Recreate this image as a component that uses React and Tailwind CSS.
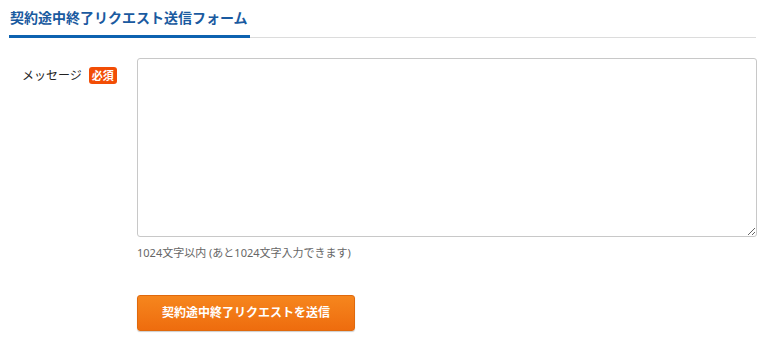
import { useState } from 'react'

const FONT = { fontFamily: '"Noto Sans", "Noto Sans CJK JP", sans-serif' }

export default function App() {
  const [message, setMessage] = useState('')
  const max = 1024

  return (
    <div className="bg-white w-[765px] h-[348px] text-[#333]" style={FONT}>
      {/* 見出し */}
      <div className="mx-[9px] pt-[5px] border-b border-[#dcdcdc]">
        <h2 className="inline-block pl-px pr-[2px] pb-[7px] -mb-px border-b-[3px] border-[#0d62b0] text-[14px] leading-[20px] font-bold text-[#1a5aa0]">
          契約途中終了リクエスト送信フォーム
        </h2>
      </div>

      {/* フォーム */}
      <div className="flex mt-[20px]">
        <div className="w-[137px] flex-shrink-0 pl-[22px] pt-[9px] flex items-start gap-[7px]">
          <span className="text-[12px] leading-[17px] text-[#222]">メッセージ</span>
          <span className="bg-[#f24d05] text-white text-[11px] leading-[17px] font-bold px-[3px] rounded-[3px]">必須</span>
        </div>
        <div className="w-[620px]">
          <textarea
            value={message}
            onChange={e => setMessage(e.target.value)}
            maxLength={max}
            className="block w-[620px] h-[179px] border border-[#c8c8c8] rounded-[3px] bg-white p-2 text-[13px] outline-none"
          />
          <p className="mt-[8px] text-[11px] leading-[16px] text-[#666]">
            {max}文字以内 (あと{max - message.length}文字入力できます)
          </p>
          <button className="mt-[34px] w-[218px] h-[36px] rounded-[3px] border border-[#e0690c] bg-gradient-to-b from-[#f6861d] to-[#ee6c0e] text-white text-[12px] font-bold shadow-[0_1px_1px_rgba(0,0,0,0.2)]">
            契約途中終了リクエストを送信
          </button>
        </div>
      </div>
    </div>
  )
}
